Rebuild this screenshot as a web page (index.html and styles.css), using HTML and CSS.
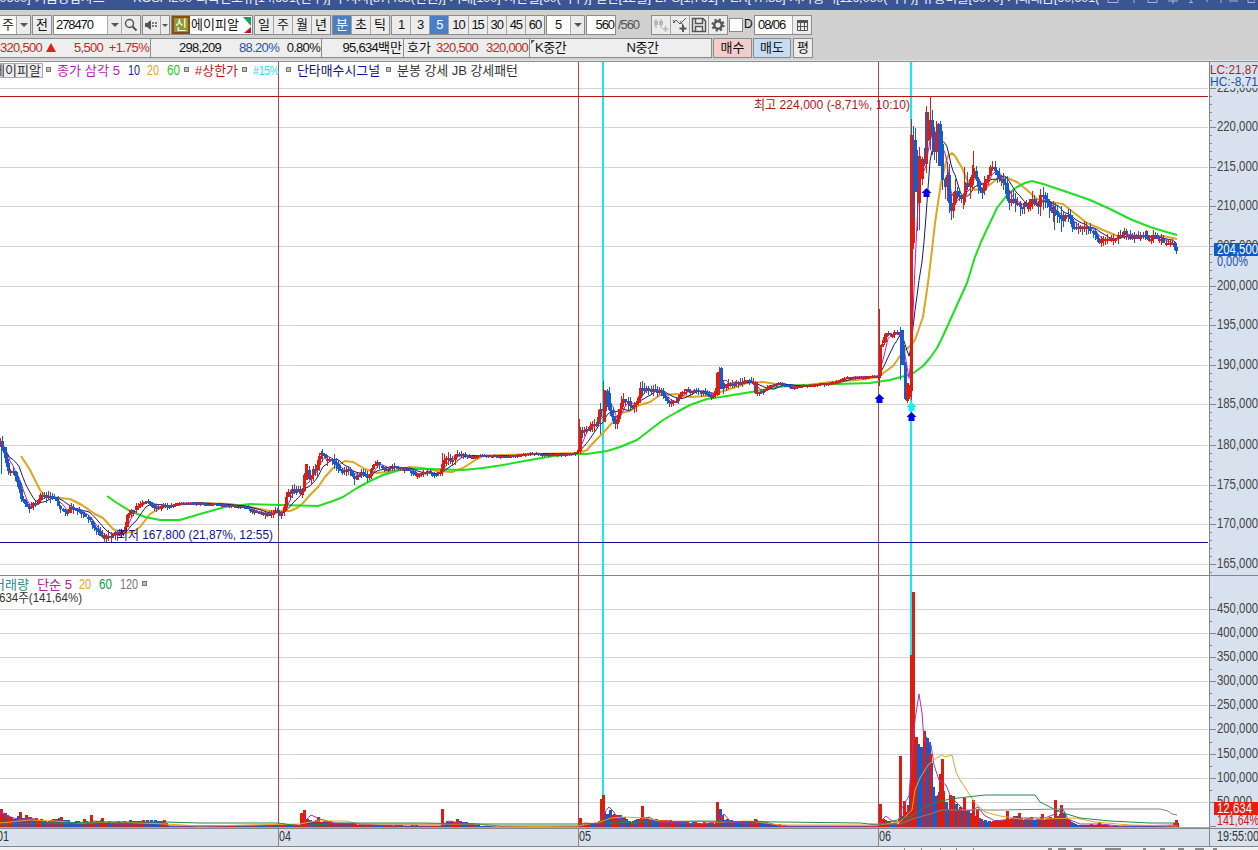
FILE: index.html
```html
<!doctype html>
<html lang="ko">

<head>
   <meta charset="utf-8">
   <title>키움종합차트</title>
   <link rel="stylesheet" href="styles.css">
</head>

<body>

   <div class="titlebar">
      <div class="title">[0600] 키움종합차트 &nbsp; - &nbsp; KOSPI200 외국인보유[14,691(천주)] 투자자[87,463(천원)] 거래[100] 시간별[60(억주)] 결산[12월] EPS[1,761] PER[47.83] 시가총액[116,060(억주)] 유통비율[6070] 거래대금[60,601(</div>
      <svg class="titleIcons" width="150" height="10" viewBox="1105 0 150 10">
         <path d="M1108 0V2.500H1118V0M1134 0V3M1148 0V2.500H1157V0M1168 1H1178M1173 0V4M1191 0V3M1189 2.500H1193M1207 0V2M1221 0V3M1229 1H1238M1248 0V2.500H1255V0" />
      </svg>
   </div>

   <div class="toolbar">
      <div class="row">
         <div class="combo type"><span>주</span><i class="caret"></i></div>
         <div class="btn prev">전</div>
         <div class="combo code">
            <span>278470</span><i class="caret"></i>
            <b><svg width="14" height="14" viewBox="0 0 14 14"><circle cx="5.500" cy="5.500" r="4" /><path d="M8.500 8.500L12.500 12.500" stroke-width="2" /></svg></b>
         </div>
         <div class="combo sound">
            <b><svg width="14" height="12" viewBox="0 0 14 12"><path class="fill" d="M1 4H3L7 1V11L3 8H1Z" /><path d="M9 3V9M12 3V9" stroke-dasharray="2 1" stroke-width="1.500" /></svg></b>
            <i class="caret"></i>
         </div>
         <div class="name">
            <em>신</em><span>에이피알</span>
            <svg width="9" height="18" viewBox="0 0 9 18"><path fill="#18a05a" d="M0 1H8V10Z" /><path fill="#c0122c" d="M8 11V17H1Z" /></svg>
         </div>
         <div class="group days"><span>일</span><span>주</span><span>월</span><span>년</span></div>
         <div class="group unit"><span class="on">분</span><span>초</span><span>틱</span></div>
         <div class="group minutes"><span>1</span><span>3</span><span class="on">5</span><span>10</span><span>15</span><span>30</span><span>45</span><span>60</span></div>
         <div class="combo count"><span>5</span><i class="caret"></i></div>
         <div class="bars">560</div>
         <div class="total">/560</div>
         <div class="group icons">
            <span class="off"><svg width="16" height="16" viewBox="0 0 16 16"><path d="M3 2V11M8 2V11M12.500 9V15M9.500 12H15.500" /><path class="fill" d="M1 4H5V8H1ZM6 4H10V8H6Z" /></svg></span>
            <span><svg width="16" height="16" viewBox="0 0 16 16"><path d="M1 6L4 3L8 7L14 1M1 3L3 6M8 4L11 8" stroke-width="1" /><path d="M11 8V15M7.500 11.500H14.500" stroke-width="2" /></svg></span>
            <span><svg width="16" height="16" viewBox="0 0 16 16"><path d="M1.500 1.500H12L14.500 4V14.500H1.500ZM4.500 2V6.500H11.500V2M4.500 14V9.500H11.500V14" /></svg></span>
            <span><svg width="16" height="16" viewBox="0 0 16 16"><circle cx="8" cy="8" r="3.800" stroke-width="2.500" /><circle cx="8" cy="8" r="5.600" stroke-width="2" stroke-dasharray="2.200 2.200" /></svg></span>
         </div>
         <div class="check"></div>
         <div class="checkText">D</div>
         <div class="combo date"><span>08/06</span><b><svg width="13" height="12" viewBox="0 0 13 12"><path d="M1.500 2V11.500H11.500V2M1 7.500H12M4.500 3V11M8.500 3V11" stroke-width="1" /><path d="M1 2.500H12" stroke-width="3" /></svg></b></div>
      </div>

      <div class="row quote">
         <div class="cell price"><span class="up">320,500</span><i class="rise"></i><span class="up diff">5,500</span><span class="up rate">+1.75%</span></div>
         <div class="cell volume"><span>298,209</span><span class="blue">88.20%</span><span class="turn">0.80%</span></div>
         <div class="cell amount"><span>95,634</span><span class="kor">백만</span></div>
         <div class="cell hoga"><span class="kor">호가</span><span class="up">320,500</span><span class="up">320,000</span></div>
         <div class="cell mid"><i></i><span>K중간</span><span class="n">N중간</span></div>
         <div class="btn buy">매수</div>
         <div class="btn sell">매도</div>
         <div class="btn avg">평</div>
      </div>
   </div>

   <svg id="chart" width="1258" height="789" viewBox="0 61 1258 789"></svg>

   <script src="chart.js"></script>
</body>

</html>
```
FILE: styles.css
```css
html,
body {
   padding: 0;
   margin: 0;
   width: 1258px;
   height: 850px;
   overflow: hidden;
   background: #FFF;
   font-family: "Liberation Sans", "Noto Sans CJK KR", sans-serif;
   font-size: 13px;
   color: #111;
}

.titlebar {
   height: 10px;
   background: #3a5592;
   overflow: hidden;
   display: flex;
   color: #e8eefa;
}

.title {
   width: 1103px;
   margin-top: -9px;
   margin-left: -4px;
   line-height: 13px;
   letter-spacing: -0.3px;
   white-space: nowrap;
   overflow: hidden;
   flex: none;
   text-align: justify;
   text-align-last: justify;
}

.titleIcons {
   margin-left: 6px;
   fill: none;
   stroke: #a9b8d8;
}

.toolbar {
   height: 51px;
   box-sizing: border-box;
   padding-top: 5px;
   background: #d0d0d0;
   border-bottom: 1px solid #e4e4e4;
}

.row {
   display: flex;
   height: 20px;
   line-height: 18px;
   white-space: nowrap;
}

.row > div {
   flex: none;
   box-sizing: border-box;
}

.row svg {
   fill: none;
   stroke: #555;
   stroke-width: 1.500;
}

.row svg .fill {
   fill: #555;
   stroke: none;
}

.btn {
   border: 1px solid #8b8b8b;
   background: #ececec;
   text-align: center;
}

.combo {
   display: flex;
   border: 1px solid #8b8b8b;
   background: #FFF;
}

.combo span {
   flex: 1;
}

.combo .caret,
.combo b {
   display: flex;
   align-items: center;
   justify-content: center;
   width: 13px;
   background: #ececec;
   border-left: 1px solid #aaa;
}

.combo .caret::after {
   content: "";
   border: 4px solid transparent;
   border-top: 4px solid #555;
   border-bottom: 0;
}

.combo b {
   width: 18px;
}

.type {
   width: 31px;
   padding-left: 2px;
   border-left: 0;
}

.prev {
   width: 20px;
   margin-left: 1px;
}

.code {
   width: 88px;
   margin-left: 1px;
   padding-left: 2px;
}

.code span,
.date span,
.bars,
.total,
.minutes {
   letter-spacing: -1.1px;
}

.sound {
   width: 28px;
   margin-left: 1px;
}

.sound b {
   border-left: 0;
}

.sound .caret {
   width: 9px;
}

.sound .caret::after {
   border-width: 3px 3px 0;
}

.name {
   display: flex;
   width: 82px;
   margin-left: 1px;
   background: #FFF;
   border: 1px solid #8b8b8b;
}

.name em {
   width: 14px;
   height: 14px;
   line-height: 14px;
   border: 2px solid #8f4a10;
   background: #8c9a32;
   color: #FFF;
   font-style: normal;
   text-align: center;
}

.name span {
   flex: 1;
   padding-left: 1px;
}

.name svg {
   stroke: none;
}

.group {
   display: flex;
   border: 1px solid #8b8b8b;
   background: #ececec;
   text-align: center;
}

.group span {
   flex: 1;
   border-left: 1px solid #a4a4a4;
}

.group span:first-child {
   border-left: 0;
}

.group .on {
   background: #4a7fc4;
   color: #FFF;
}

.days {
   width: 77px;
   margin-left: 1px;
}

.unit {
   width: 58px;
   margin-left: 1px;
}

.minutes {
   width: 154px;
   margin-left: 1px;
}

.count {
   width: 39px;
   margin-left: 1px;
}

.count span {
   text-align: center;
}

.bars {
   width: 30px;
   margin-left: 1px;
   padding-right: 1px;
   border: 1px solid #8b8b8b;
   background: #FFF;
   text-align: right;
}

.total {
   width: 35px;
   padding-left: 2px;
   line-height: 20px;
   color: #555;
}

.icons {
   width: 77px;
}

.icons span {
   display: flex;
   align-items: center;
   justify-content: center;
}

.icons .off {
   opacity: 0.35;
}

.check {
   width: 14px;
   height: 14px;
   margin: 3px 0 0 1px;
   border: 1px solid #8b8b8b;
   background: #FFF;
}

.checkText {
   width: 11px;
   padding-left: 1px;
   font-size: 12px;
}

.date {
   width: 58px;
   padding-left: 3px;
}

.quote {
   margin-top: 3px;
}

.cell {
   display: flex;
   background: #eee;
   border: 1px solid #8b8b8b;
   border-left: 0;
   padding-right: 1px;
   justify-content: flex-end;
   letter-spacing: -0.7px;
}

.cell .kor {
   letter-spacing: 0;
}

.up {
   color: #c22a22;
}

.blue {
   color: #2c4fb0;
}

.rise {
   width: 0;
   height: 0;
   margin: 4px 0 0 4px;
   border: 5px solid transparent;
   border-top: 0;
   border-bottom: 9px solid #dc2418;
}

.price {
   width: 151px;
}

.diff {
   width: 49px;
   text-align: right;
}

.rate {
   width: 48px;
   text-align: right;
}

.volume {
   width: 171px;
}

.volume .blue {
   width: 58px;
   text-align: right;
}

.volume .turn {
   width: 41px;
   text-align: right;
}

.amount {
   width: 82px;
}

.hoga {
   width: 126px;
}

.hoga .up {
   width: 50px;
   text-align: right;
}

.hoga .kor {
   margin-right: -3px;
}

.mid {
   width: 182px;
   justify-content: flex-start;
   letter-spacing: -0.4px;
}

.mid i {
   width: 0;
   height: 0;
   margin: 1px 0 0 1px;
   border-top: 4px solid #555;
   border-right: 4px solid transparent;
}

.mid .n {
   margin-left: 60px;
}

.buy {
   width: 39px;
   margin-left: 1px;
   background: #f3cccb;
}

.sell {
   width: 38px;
   margin-left: 1px;
   background: #c6dcf2;
}

.avg {
   width: 20px;
   margin-left: 2px;
}

#chart {
   display: block;
}

#chart text {
   white-space: pre;
}
```
FILE: chart.js
```js
var svg = document.getElementById('chart');
var NS = 'http://www.w3.org/2000/svg';
var RED = '#dc1e10', BLUE = '#1a5ac8';

function el(tag, attrs) {
   var e = document.createElementNS(NS, tag);
   for (var k in attrs) e.setAttribute(k, attrs[k]);
   svg.appendChild(e);
   return e;
}

function rect(x, y, w, h, fill) {
   return el('rect', { x: x, y: y, width: w, height: h, fill: fill, 'shape-rendering': 'crispEdges' });
}

function text(x, y, str, fill, len) {
   // plain numbers are set taller and condensed
   var size = /^[\d,:%]+$/.test(str) ? 14 : 13;
   var t = el('text', { x: x, y: y, fill: fill, 'font-size': size });
   if (len) {
      t.setAttribute('textLength', len);
      t.setAttribute('lengthAdjust', 'spacingAndGlyphs');
   }
   t.textContent = str;
}

function line(points, color, width) {
   el('polyline', { points: points, fill: 'none', stroke: color, 'stroke-width': width, 'stroke-linejoin': 'round' });
}

function parse(str) {
   return str.trim().split(/\s+/).map(function (p) { return p.split(',').map(Number); });
}

// linear interpolation between anchors
function at(pts, x) {
   for (var i = 1; i < pts.length; i++) {
      if (x <= pts[i][0]) {
         var a = pts[i - 1], b = pts[i];
         return a[1] + (b[1] - a[1]) * Math.max(0, x - a[0]) / (b[0] - a[0] || 1);
      }
   }
   return pts[pts.length - 1][1];
}

var seed = 7;
function rnd() {
   seed = (seed * 16807) % 2147483647;
   return seed / 2147483647;
}

// grid rows, 225,000 down to 165,000
var rows = [88, 127, 167, 206, 246, 286, 325, 365, 404, 445, 485, 524, 564];

// background, grid and axis panel
rect(0, 61, 1258, 789, '#fff');
rect(0, 61, 1258, 1, '#8c8c94');
rect(1209, 62, 49, 784, '#d8e2ee');
rect(0, 829, 1258, 17, '#d8e2ee');
rows.forEach(function (y) {
   rect(0, y, 1208, 1, '#d4d4d4');
});
for (var i = 1; i < 10; i++) {
   rect(0, Math.round(826 - i * 24.15), 1208, 1, '#d4d4d4');
}

// day separators and signal lines
[278, 578, 878].forEach(function (x) {
   rect(x, 62, 1, 766, '#b84440');
   rect(x, 828, 1, 18, '#8b8b8b');
});
rect(602, 62, 2, 766, '#18e8f0');
rect(910, 62, 2, 766, '#18e8f0');
rect(0, 96, 1208, 1, '#b01818');
rect(0, 542, 1208, 1, '#10108c');

// moving averages 20 / 60
var ma60 = '107,496 117,503 130,511 145,517 160,520 180,520 200,514 225,507 250,504 280,505 318,506 333,501 343,497 357,488 370,481 383,475 400,470 413,469 430,469 463,470 483,468 503,465 530,460 553,456 578,454 587,454 607,451 620,447 637,440 650,430 663,420 677,412 690,405 707,399 727,396 757,391 777,387 803,385 837,384 870,383 890,380 912,374 923,366 930,358 937,348 943,336 948,325 957,305 967,283 971,270 975,257 981,242 988,227 997,208 1007,195 1017,187 1025,183 1032,181 1043,184 1055,188 1067,192 1090,200 1110,209 1130,219 1150,227 1163,231 1177,235';
var ma20 = '21,456 30,470 40,490 45,497 60,498 70,499 82,505 95,514 103,518 113,529 122,533 133,532 140,527 150,514 160,508 175,505 200,503 230,504 250,507 270,511 290,511 297,508 303,503 310,495 318,487 325,477 333,468 345,461 353,462 365,469 377,473 387,472 397,470 410,467 423,468 437,471 452,472 463,468 477,459 483,456 503,455 579,453 587,450 593,443 603,433 612,423 620,413 630,411 640,405 650,402 660,395 677,394 690,397 707,396 727,390 747,383 763,382 783,385 803,386 830,382 857,380 878,377 893,366 903,352 910,346 915,340 923,317 928,283 932,250 935,223 938,203 941,183 946,162 948,156 952,153 955,156 962,168 968,182 975,190 987,187 997,179 1007,178 1017,182 1027,190 1037,199 1045,201 1056,203 1063,204 1073,212 1087,223 1103,230 1120,237 1137,237 1163,236 1177,239';
line(ma20, '#dfa51e', 2);
line(ma60, '#1ee01e', 2);

var closes = parse('0,443 3,446 5,460 8,470 12,471 15,475 18,485 21,499 24,500 27,508 30,508 33,502 36,507 38,497 43,492 46,500 49,494 55,498 60,507 65,513 70,508 78,510 84,514 90,522 95,530 100,534 104,540 108,535 113,533 118,535 122,532 125,528 127,515 130,512 136,506 142,502 148,501 154,507 158,509 162,505 170,506 178,503 200,503 215,504 235,506 245,507 252,511 262,513 270,515 277,510 279,515 283,510 285,500 289,491 295,490 302,494 303,480 306,465 309,480 313,470 316,468 318,457 322,454 328,459 332,460 337,467 342,474 348,466 354,478 360,473 368,477 372,467 377,463 384,469 392,467 400,468 408,470 415,475 424,471 432,474 440,473 443,462 450,460 456,455 464,455 472,457 480,455 500,456 520,455 532,453 550,454 575,453 578,450 579,427 582,431 588,431 589,424 597,421 600,408 602,422 604,390 606,392 609,408 613,420 616,424 618,415 622,398 626,400 631,407 636,405 641,386 645,388 652,391 660,392 666,400 672,403 678,397 684,391 695,391 702,391 710,396 715,394 717,375 720,370 722,390 726,385 732,383 742,383 747,379 753,383 755,392 762,391 770,385 780,383 790,387 800,386 820,384 835,382 845,377 860,377 876,376 878,376 880,345 882,343 886,335 893,334 898,333 900,333 901,350 903,365 905,396 907,400 909,385 910,391 912,135 914,140 915,160 917,190 919,203 920,160 922,157 925,160 926,135 928,114 930,118 933,150 935,150 937,125 940,126 941,165 944,188 947,175 949,205 952,208 954,190 958,190 961,203 965,185 969,185 972,170 975,170 978,189 983,188 989,175 992,168 1000,177 1004,180 1008,205 1013,197 1020,208 1025,205 1030,202 1038,203 1040,195 1046,200 1050,208 1054,214 1058,218 1063,218 1068,214 1071,228 1080,229 1087,228 1094,233 1098,242 1108,240 1115,239 1121,234 1126,233 1130,236 1150,236 1160,238 1165,242 1171,241 1173,246 1176,250');

// how rough the tape is, px of wick by x
var rough = parse('0,6 60,5 85,4 120,7 135,4 160,4 175,1 240,1 262,3 280,4 290,6 325,7 345,6 370,5 390,3 440,3 446,8 460,4 475,1 575,1 580,5 600,9 645,7 665,4 680,4 712,4 720,6 735,4 760,4 775,1 840,1 876,1 882,5 898,3 904,6 912,12 925,14 960,14 985,9 1010,9 1050,11 1070,7 1090,6 1110,5 1150,5 1177,4');

// tick is 500 above 200,000
function tick(y) {
   return y < 286 ? 88 + Math.round((y - 88) / 3.97) * 3.97 : y;
}

var bars = [], step = 2.085, prev = closes[0][1];
for (var x = 0; x <= 1177; x += step) {
   var r = at(rough, x);
   var c = tick(at(closes, x) + (rnd() - 0.5) * r * 0.8);
   bars.push({ x: Math.round(x), o: prev, c: c, r: r });
   prev = c;
}

function average(n) {
   return bars.map(function (b, i) {
      var s = 0, k = 0;
      for (var j = Math.max(0, i - n + 1); j <= i; j++) { s += bars[j].c; k++; }
      return b.x + ',' + (s / k).toFixed(1);
   }).join(' ');
}

line(average(5), '#c018c0', 1);
line(average(10), '#101c70', 1);

bars.forEach(function (b) {
   var col = b.c < b.o || (b.c === b.o && rnd() > 0.5) ? RED : BLUE;
   var top = Math.min(b.o, b.c), h = Math.max(2, Math.abs(b.o - b.c));
   rect(b.x - 1, Math.round(top), 3, Math.round(h), col);
   var up = rnd() * b.r, dn = rnd() * b.r;
   rect(b.x, Math.round(top - up), 1, Math.round(h + up + dn), col);
});

// long wicks and large bodies
[
   [1, 442, 474, BLUE], [278, 505, 525, '#6a4090'], [322, 449, 462, BLUE], [442, 453, 472, RED],
   [579, 419, 452, RED], [603, 381, 420, '#555c38'], [600, 403, 434, BLUE], [719, 367, 390, RED],
   [879, 309, 386, RED], [900, 327, 380, BLUE], [911, 119, 400, RED], [913, 126, 218, BLUE],
   [917, 150, 231, BLUE], [919, 147, 230, RED], [926, 106, 170, RED], [930, 96, 150, RED],
   [932, 110, 155, BLUE], [973, 151, 185, RED], [964, 167, 205, RED], [1043, 187, 210, BLUE],
   [1054, 206, 230, BLUE], [1061, 210, 232, BLUE], [1176, 246, 254, BLUE], [1146, 230, 238, RED]
].forEach(function (w) { rect(w[0], w[1], 1, w[2] - w[1], w[3]); });

[
   [910, 135, 256, RED], [717, 373, 22, RED], [720, 368, 20, BLUE], [755, 382, 12, RED],
   [603, 390, 32, RED], [606, 391, 16, BLUE], [305, 464, 16, RED], [925, 112, 40, '#7a4068'],
   [938, 124, 42, BLUE], [901, 330, 35, BLUE], [904, 365, 34, BLUE], [906, 383, 18, RED],
   [918, 156, 47, RED], [914, 160, 32, BLUE]
].forEach(function (b) { rect(b[0], b[1], 3, b[2], b[3]); });

// signal arrows
function arrow(x, y, fill) {
   el('path', { d: 'M' + x + ' ' + (y - 5) + 'l5 5h-2v4h-6v-4h-2z', fill: fill });
}
arrow(879.5, 399, '#0000e0');
arrow(926.5, 193, '#0000e0');
arrow(911.5, 407, '#18f0f8');
arrow(911.5, 417, '#0000e0');

// volume
var envelope = parse('0,15 8,12 14,9 20,12 33,8 45,7 60,8 70,6 80,5 90,6 100,6 115,5 125,6 150,6 164,6 167,1 240,1 280,3 299,3 306,10 310,7 325,6 340,4 360,3 380,2 440,1 446,6 465,5 480,1 575,1 583,3 597,3 605,18 612,12 624,10 630,6 645,9 665,7 680,5 715,4 719,17 723,9 730,6 760,6 768,4 790,1 878,1 882,9 888,6 897,3 902,12 908,22 914,95 917,84 921,77 924,92 928,85 932,40 935,27 943,38 946,24 955,20 961,16 970,15 980,8 990,6 1005,8 1010,10 1030,9 1045,9 1052,11 1063,14 1068,6 1075,2 1100,3 1110,1 1165,1 1177,4');
for (x = 0; x <= 1177; x += step) {
   var h = Math.max(1, Math.round(at(envelope, x) * (x > 912 && x < 932 ? 1 : 0.75 + rnd() * 0.4)));
   rect(Math.round(x), 827 - h, 3, h, rnd() > (x < 912 || x > 960 ? 0.55 : 0.85) ? RED : BLUE);
}
parse('0,18 6,12 19,15 60,10 83,8 90,12 101,9 163,7 300,14 303,17 317,10 441,18 456,8 579,9 600,28 602,32 613,13 641,21 716,25 754,8 879,23 899,71 903,26 910,172 912,235 923,96 929,73 937,32 939,53 941,68 949,32 952,31 963,29 972,27 976,18 1006,16 1018,14 1041,13 1054,27 1060,22 1098,5 1173,4 1175,7').forEach(function (v) {
   rect(v[0], 827 - v[1], 3, v[1], RED);
});

line('0,812 8,816 20,820 30,818 50,823 80,824 95,821 120,824 163,823 170,826 300,825 306,820 311,815 320,819 335,823 380,825 442,825 449,821 460,823 500,826 578,826 585,823 599,824 603,814 609,807 614,812 617,819 635,824 641,820 649,817 658,822 700,824 716,822 724,814 731,822 750,824 765,822 780,826 878,826 882,820 886,816 892,821 898,822 902,808 909,796 912,755 915,720 919,694 922,713 924,740 931,745 934,765 939,780 946,785 950,795 957,803 965,811 972,810 978,807 984,815 995,821 1020,818 1045,818 1055,814 1062,807 1068,819 1080,824 1100,824 1120,826 1177,825', '#b030b0', 1);
line('0,823 30,820 55,821 80,823 120,822 165,824 200,826 300,824 315,821 345,821 360,824 480,824 500,827 578,826 600,822 611,818 625,817 645,818 660,821 720,822 750,821 780,825 878,825 900,822 912,810 915,790 920,778 928,765 938,757 942,755 945,757 952,755 956,772 960,780 968,792 975,803 985,812 1000,816 1020,819 1045,819 1075,818 1095,822 1130,825 1177,826', '#e0a820', 1);
line('0,824 100,822 165,822 200,823 278,823 300,826 340,823 420,823 480,824 578,824 610,823 640,822 700,821 860,823 878,825 912,816 925,807 940,801 958,798 985,795 1035,795 1040,802 1052,808 1060,812 1080,818 1110,821 1150,823 1177,823', '#208848', 1);
line('870,824 900,824 912,819 930,814 942,810 970,810 1000,810 1060,809 1160,809 1168,811 1172,814 1177,815', '#808080', 1);

// pane borders
rect(0, 575, 1258, 1, '#85858a');
rect(0, 827, 1209, 1, '#e49090');
rect(0, 828, 1258, 1, '#85858a');
rect(1209, 62, 1, 784, '#85858a');
rect(0, 846, 1258, 1, '#85858a');
rect(0, 847, 1258, 3, '#f2f2f2');
[[904, 1], [921, 1], [940, 1], [956, 1], [973, 1], [1048, 4], [1058, 8], [1074, 8], [1105, 16], [1143, 3], [1160, 5], [1178, 6], [1195, 9], [1213, 4]].forEach(function (d) {
   rect(d[0], 848, d[1], 2, '#8a8a8a');
});

// price axis
rows.forEach(function (y, i) {
   rect(1210, y, 6, 1, '#85858a');
   text(1217, y + 4, (225 - i * 5) + ',000', '#444', 41);
   for (var k = 1; k < 5; k++) {
      if (y + k * 7.94 < 572) rect(1210, Math.round(y + k * 7.94), 2, 1, '#85858a');
   }
});
rect(1210, 63, 48, 25, '#d8e2ee');
text(1210, 74, 'LC:21,87', '#b01c1c', 48);
text(1210, 86, 'HC:-8,71', '#1c50a8', 48);
rect(1214, 243, 44, 13, '#1258c8');
text(1217, 254, '204,500', '#fff', 41);
text(1217, 266, '0,00%', '#1c50b8', 31);

// volume axis
for (i = 1; i < 10; i++) {
   y = Math.round(826 - i * 24.15);
   rect(1210, y, 6, 1, '#85858a');
   rect(1210, y - 12, 2, 1, '#85858a');
   text(1217, y + 4, i * 50 + ',000', '#444', i > 1 ? 41 : 35);
}
rect(1210, 826, 6, 1, '#85858a');
rect(1214, 802, 44, 13, '#e81c10');
text(1217, 813, '12,634', '#fff', 35);
text(1217, 825, '141,64%', '#c81c18', 42);

// time axis
text(-3, 841, '01', '#333', 12);
text(279, 841, '04', '#333', 12);
text(579, 841, '05', '#333', 12);
text(879, 841, '06', '#333', 12);
text(1217, 841, '19:55:00', '#333', 42);

text(754, 109, '최고 224,000 (-8,71%, 10:10)', '#b01818', 156);
text(117, 539, '최저 167,800 (21,87%, 12:55)', '#10108c', 156);

function square(x, y) {
   el('rect', { x: x + 0.5, y: y + 0.5, width: 4, height: 4, fill: '#c0c0c0', stroke: '#777' });
}

// legends
el('rect', { x: -5.5, y: 63.5, width: 48, height: 14, fill: '#eee', stroke: '#aaa' });
text(-7, 75, '에이피알', '#333', 48);
square(46, 67);
text(57, 75, '종가 삼각 5', '#c018c0', 63);
text(128, 75, '10', '#102c90', 12);
text(147, 75, '20', '#dfa51e', 12);
text(167, 75, '60', '#18c818', 13);
square(184, 67);
text(195, 75, '#상한가', '#c01818', 43);
square(242, 67);
text(253, 75, '#15%', '#18e0f0', 26);
square(286, 67);
text(297, 75, '단타매수시그널', '#10108c', 83);
square(386, 67);
text(397, 75, '분봉 강세 JB 강세패턴', '#333', 121);

text(-7, 589, '거래량', '#2c8888', 36);
text(37, 589, '단순 5', '#b020a0', 35);
text(79, 589, '20', '#dfa51e', 12);
text(99, 589, '60', '#109838', 13);
text(120, 589, '120', '#777', 18);
square(142, 581);
text(-1, 602, '634주(141,64%)', '#333', 83);
```
